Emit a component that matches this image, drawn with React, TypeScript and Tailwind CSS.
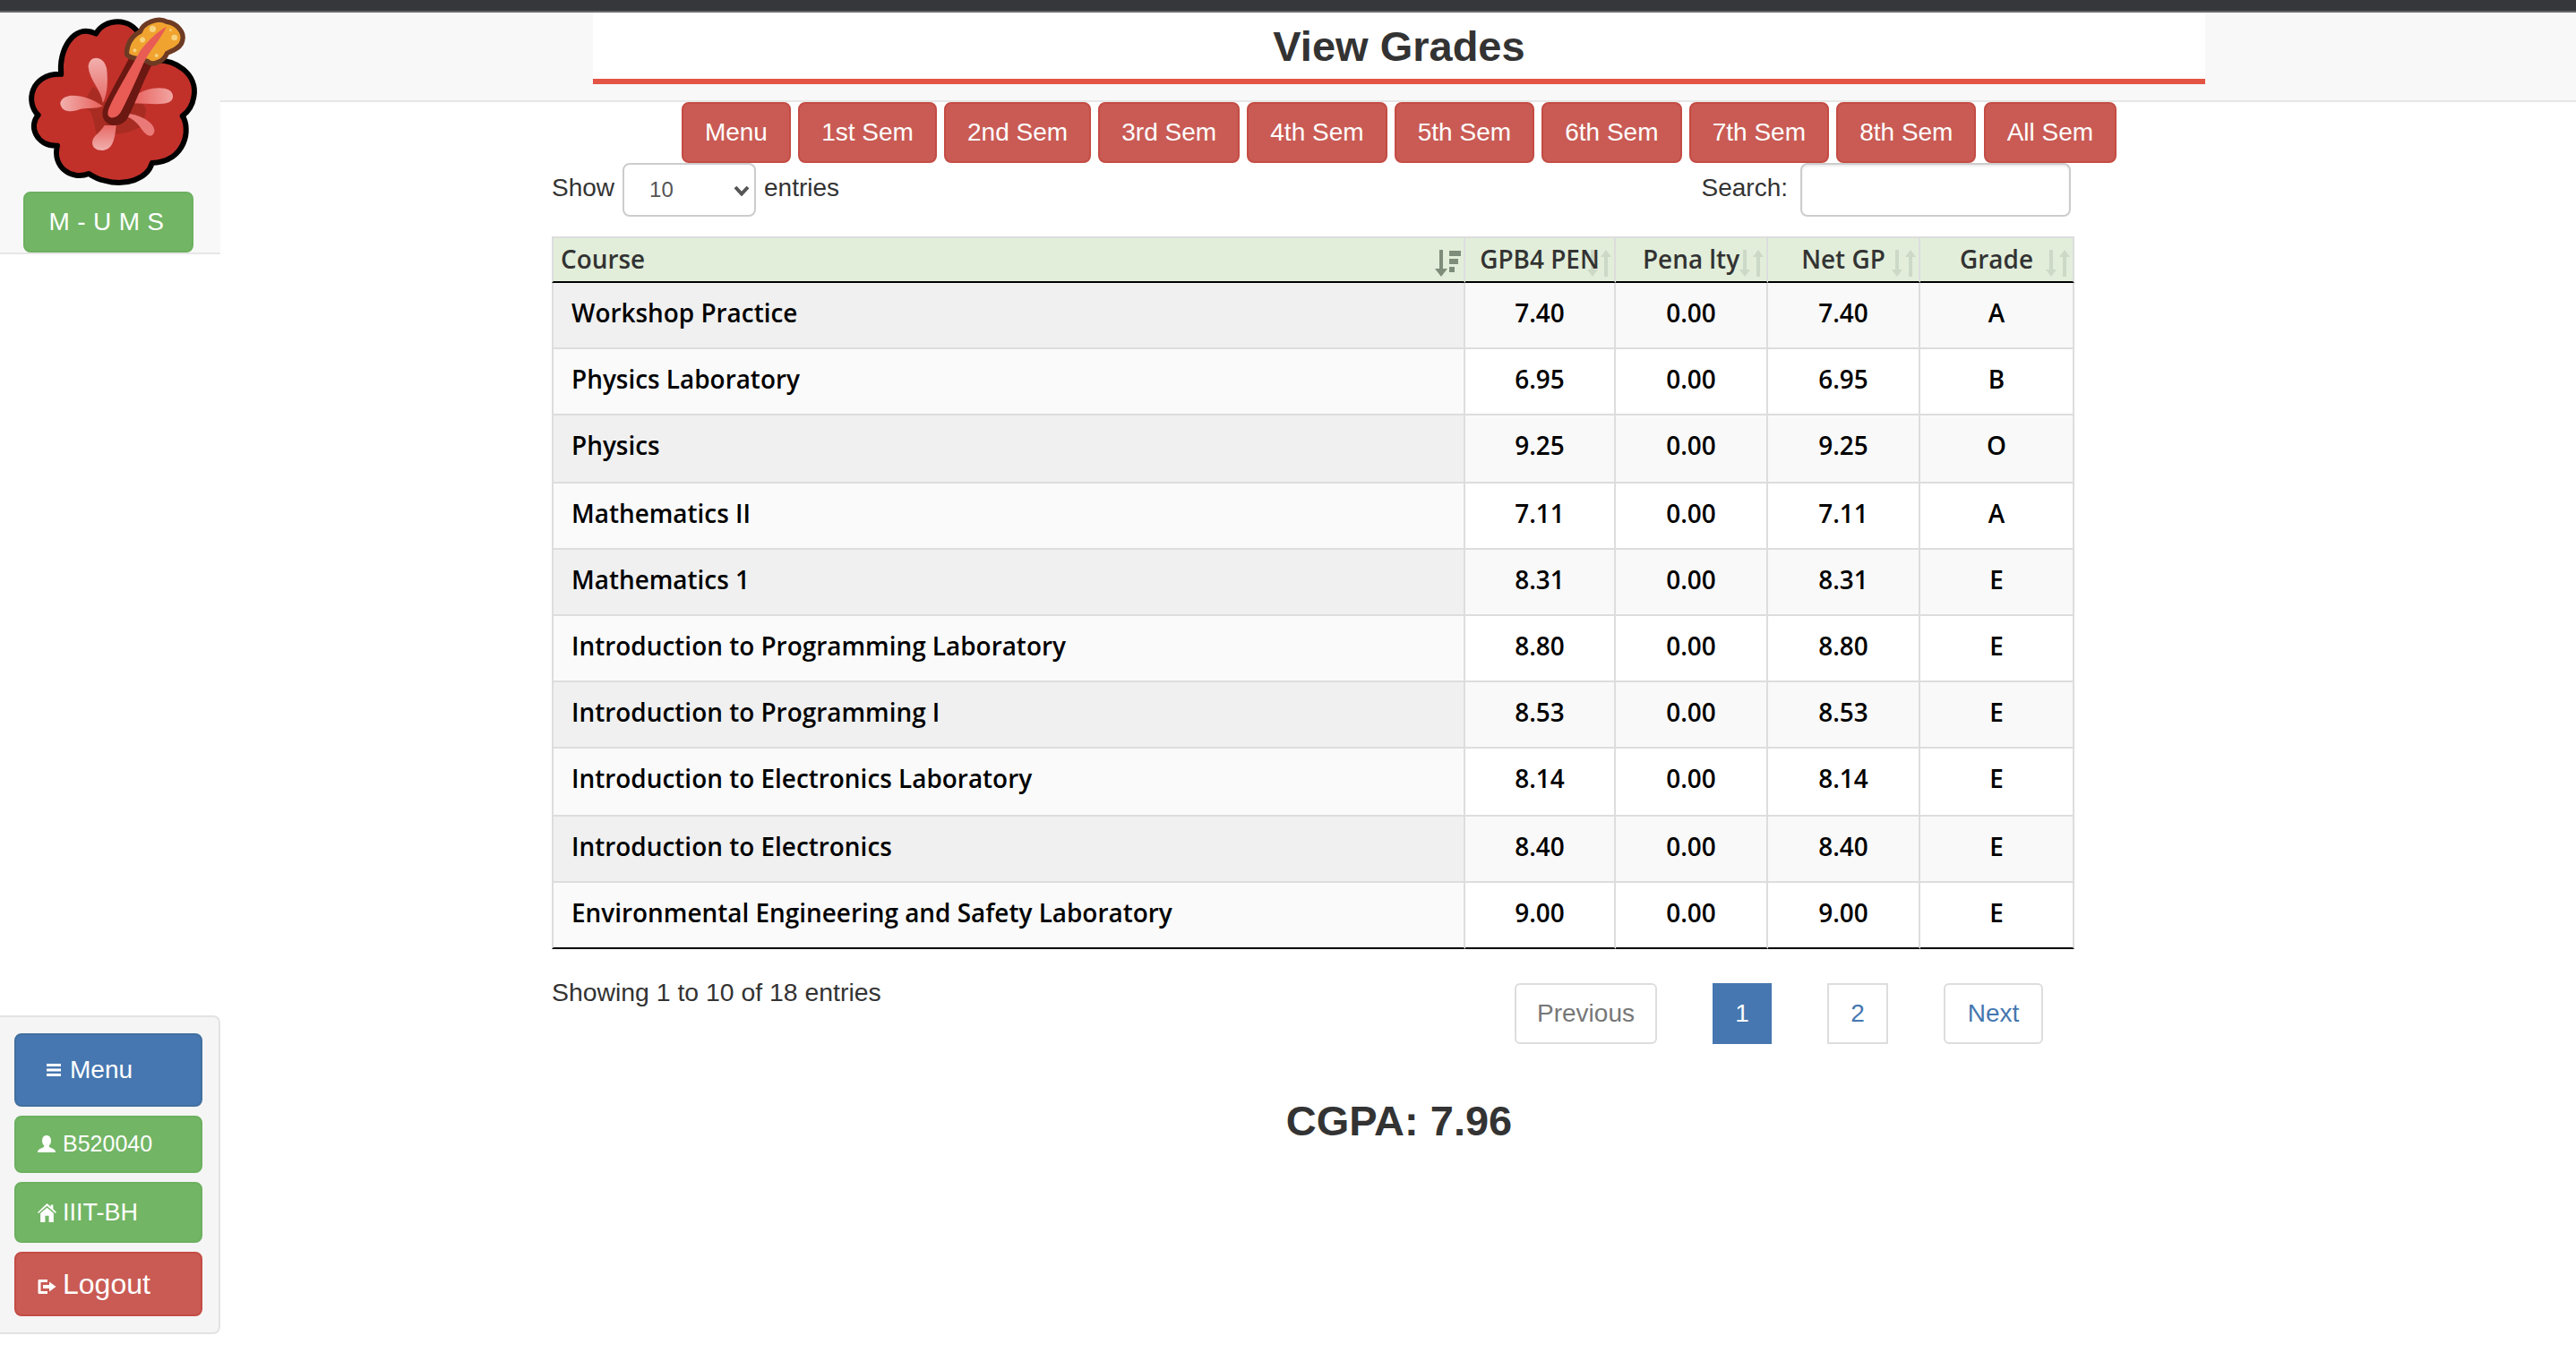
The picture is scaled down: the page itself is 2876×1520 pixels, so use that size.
const SEMESTERS = ["Menu", "1st Sem", "2nd Sem", "3rd Sem", "4th Sem", "5th Sem", "6th Sem", "7th Sem", "8th Sem", "All Sem"];

const GRADES = [
  { course: "Workshop Practice", gp: "7.40", grade: "A", h: "h-[74px]" },
  { course: "Physics Laboratory", gp: "6.95", grade: "B", h: "h-[74px]" },
  { course: "Physics", gp: "9.25", grade: "O", h: "h-[76px]" },
  { course: "Mathematics II", gp: "7.11", grade: "A", h: "h-[74px]" },
  { course: "Mathematics 1", gp: "8.31", grade: "E", h: "h-[74px]" },
  { course: "Introduction to Programming Laboratory", gp: "8.80", grade: "E", h: "h-[74px]" },
  { course: "Introduction to Programming I", gp: "8.53", grade: "E", h: "h-[74px]" },
  { course: "Introduction to Electronics Laboratory", gp: "8.14", grade: "E", h: "h-[76px]" },
  { course: "Introduction to Electronics", gp: "8.40", grade: "E", h: "h-[74px]" },
  { course: "Environmental Engineering and Safety Laboratory", gp: "9.00", grade: "E", h: "h-[74px]" },
];

const SANS = "font-['Liberation_Sans',Arial,sans-serif]";
const OPEN = "font-['Open_Sans',sans-serif]";

function Hibiscus() {
  return (
    <svg viewBox="90 50 580 580" className="block w-[193px] h-[193px]">
      <defs>
        <linearGradient id="petalA" x1="0" y1="0" x2="1" y2="0">
          <stop offset="0" stopColor="#f2b0ae" />
          <stop offset="1" stopColor="#e75f5a" />
        </linearGradient>
        <linearGradient id="petalB" x1="1" y1="0" x2="0" y2="0">
          <stop offset="0" stopColor="#f2a5a3" />
          <stop offset="1" stopColor="#e75f5a" />
        </linearGradient>
        <linearGradient id="petalC" x1="0" y1="0" x2="0" y2="1">
          <stop offset="0" stopColor="#f2b0ae" />
          <stop offset="1" stopColor="#e66a66" />
        </linearGradient>
        <linearGradient id="petalD" x1="0" y1="1" x2="0" y2="0">
          <stop offset="0" stopColor="#f2b0ae" />
          <stop offset="1" stopColor="#e66a66" />
        </linearGradient>
      </defs>
      <path
        d="M205 248 C195 170 245 75 322 112 C350 60 440 55 470 120 L500 203 C590 190 665 250 650 325 C645 355 630 375 612 388 C640 430 625 540 510 546 C495 600 420 625 350 605 C325 600 310 590 298 582 C240 605 175 560 192 488 C120 490 95 420 128 385 C85 345 100 245 205 248 Z"
        fill="#c1312a"
        stroke="#000"
        strokeWidth="18"
        strokeLinejoin="round"
      />
      <path
        d="M310 290 C330 300 345 320 350 340 L440 330 C470 340 490 350 490 370 L480 420 C450 440 410 450 380 450 C360 470 340 470 325 450 C315 420 315 395 300 370 L270 350 C290 330 300 310 310 290 Z"
        fill="#a92c22"
      />
      <path d="M296 222 C300 180 350 185 358 230 C362 270 362 310 345 345 C340 300 300 270 296 222 Z" fill="url(#petalC)" />
      <path d="M202 345 C210 305 290 315 345 355 C320 365 300 360 270 365 C240 378 205 375 202 345 Z" fill="url(#petalA)" />
      <path d="M450 322 C500 285 580 285 580 322 C580 360 510 345 440 345 Z" fill="url(#petalB)" />
      <path d="M430 380 C470 385 520 410 518 440 C510 470 485 450 470 425 C455 405 440 395 425 390 Z" fill="#ea7a77" />
      <path d="M350 420 L390 420 C385 450 385 500 345 504 C305 505 300 470 325 450 C335 440 345 430 350 420 Z" fill="url(#petalD)" />
      <path d="M344 375 C350 340 395 270 435 190 L510 215 C480 270 455 345 428 395 C405 435 340 425 344 375 Z" fill="#6b1712" />
      <path
        d="M560 72 C590 75 620 105 612 135 C605 165 570 170 560 178 C550 205 510 222 495 205 C470 195 430 195 425 180 C425 150 440 120 470 105 C480 75 530 55 560 72 Z"
        fill="#f0a32f"
        stroke="#6d3a24"
        strokeWidth="16"
        strokeLinejoin="round"
      />
      <path d="M362 375 C365 350 420 260 470 170 C500 130 530 105 558 88 C540 130 500 170 482 210 C460 260 430 330 405 375 C390 400 358 400 362 375 Z" fill="#e85c55" />
      <circle cx="512" cy="96" r="11" fill="#f6d37f" />
      <circle cx="478" cy="133" r="9" fill="#f6d37f" />
      <circle cx="585" cy="125" r="10" fill="#f6d37f" />
      <circle cx="452" cy="168" r="6" fill="#f6d37f" />
      <circle cx="525" cy="185" r="6" fill="#f6d37f" />
      <circle cx="572" cy="100" r="4" fill="#f6d37f" />
    </svg>
  );
}

function MenuGlyph() {
  return (
    <svg viewBox="0 0 16 16" className="w-4 h-4 fill-white">
      <rect x="0" y="1" width="16" height="3" />
      <rect x="0" y="6.5" width="16" height="3" />
      <rect x="0" y="12" width="16" height="3" />
    </svg>
  );
}

function UserGlyph() {
  return (
    <svg viewBox="0 0 20 20" className="w-5 h-5 fill-white">
      <path d="M10 0 C13 0 15 2.5 15 6 C15 8.5 14 10.5 12.6 11.6 C12.6 12.8 13.5 13.4 15 14 C17.5 15 20 16 20 19 L0 19 C0 16 2.5 15 5 14 C6.5 13.4 7.4 12.8 7.4 11.6 C6 10.5 5 8.5 5 6 C5 2.5 7 0 10 0 Z" />
    </svg>
  );
}

function HomeGlyph() {
  return (
    <svg viewBox="0 0 20 20" className="w-[21px] h-[21px] fill-white">
      <path d="M10 0 L14 3.6 L14 1.5 L16.5 1.5 L16.5 6 L20 9.5 L19 10.5 L10 2.6 L1 10.5 L0 9.5 Z" />
      <path d="M3 10.5 L10 4.5 L17 10.5 L17 20 L12 20 L12 13 L8 13 L8 20 L3 20 Z" />
    </svg>
  );
}

function LogoutGlyph() {
  return (
    <svg viewBox="0 0 21 20" className="w-[21px] h-[20px] fill-white mt-[6px]">
      <path d="M2 2 L11 2 L11 5 L3.5 5 L3.5 15 L11 15 L11 18 L2 18 C1 18 0.5 17.5 0.5 16.5 L0.5 3.5 C0.5 2.5 1 2 2 2 Z" />
      <path d="M6 8 L13 8 L13 4.5 L20.5 10 L13 15.5 L13 12 L6 12 Z" />
    </svg>
  );
}

/** 並び替え前の薄い矢印 */
function SortBoth() {
  return (
    <svg viewBox="0 0 27 30" className="absolute right-[3px] top-[13px] w-[27px] h-[30px] fill-[#cbd9c6]">
      <path d="M4 0 H8 V22 H12 L6 30 L0 22 H4 Z" />
      <path d="M19 30 H23 V8 H27 L21 0 L15 8 H19 Z" />
    </svg>
  );
}

function SortActive() {
  return (
    <svg viewBox="0 0 29 30" className="absolute right-[3px] top-[13px] w-[29px] h-[30px] fill-[#7e8c7a]">
      <path d="M5 0 H9 V21 H14 L7 30 L0 21 H5 Z" />
      <rect x="16" y="1" width="13" height="6" />
      <rect x="16" y="10" width="10" height="6" />
      <rect x="16" y="19" width="6" height="6" />
    </svg>
  );
}

function SideButton({ className, icon, label }: { className: string; icon: React.ReactNode; label: string }) {
  return (
    <div className={`flex items-center rounded-lg border-2 text-white ${className}`}>
      {icon}
      <span>{label}</span>
    </div>
  );
}

export default function App() {
  return (
    <div className={`w-[2876px] h-[1520px] overflow-hidden bg-white text-[#333] text-[28px] ${SANS}`}>
      <div className="h-[14px] bg-[#36373b] border-b-2 border-[#66676a]" />
      <div className="flex h-[1506px]">
        {/* 左カラム */}
        <div className="w-[246px] shrink-0 flex flex-col">
          <div className="h-[270px] bg-[#f8f8f8] border-b-2 border-[#e7e7e7] pl-[30px] pt-[3px]">
            <Hibiscus />
            <div className="w-[190px] h-[68px] -ml-[4px] mt-[4px] pl-[4px] flex items-center justify-center rounded-lg border-2 border-[#6cb05f] bg-[#72b565] text-white tracking-[8.4px]">
              M-UMS
            </div>
          </div>
          <div className="flex-1" />
          <div className="h-[356px] mb-[30px] bg-[#f5f5f5] border-2 border-l-0 border-[#e3e3e3] rounded-r-lg pl-[16px] pr-[18px] pt-[18px] flex flex-col gap-[10px]">
            <SideButton className="h-[82px] border-[#41709f] bg-[#4677b0] pl-[34px] gap-[10px]" icon={<MenuGlyph />} label="Menu" />
            <SideButton className="h-[64px] border-[#6cb05f] bg-[#72b565] pl-[24px] gap-[8px] text-[25px]" icon={<UserGlyph />} label="B520040" />
            <SideButton className="h-[68px] border-[#6cb05f] bg-[#72b565] pl-[24px] gap-[7px] text-[27px]" icon={<HomeGlyph />} label="IIIT-BH" />
            <SideButton className="h-[72px] border-[#c44c44] bg-[#c95b54] pl-[24px] gap-[7px] text-[32px]" icon={<LogoutGlyph />} label="Logout" />
          </div>
        </div>

        {/* 本体 */}
        <div className="flex-1 min-w-0">
          <div className="h-[100px] bg-[#f8f8f8] border-b-2 border-[#e7e7e7] pl-[416px]">
            <h1 className="w-[1800px] h-[80px] bg-white border-b-[6px] border-[#e35444] flex items-center justify-center text-[47px] leading-none font-bold">
              View Grades
            </h1>
          </div>

          <div className="w-[1800px] ml-[416px] flex justify-center gap-[8.2px]">
            {SEMESTERS.map((s) => (
              <div key={s} className="h-[68px] px-[24px] flex items-center rounded-lg border-2 border-[#c44c44] bg-[#c95b54] text-white">
                {s}
              </div>
            ))}
          </div>

          <div className="w-[1700px] ml-[370px]">
            <div className="flex justify-between pr-[4px] h-[82px]">
              <div className="flex items-start gap-[9px] leading-[56px]">
                <span>Show</span>
                <div className="relative">
                  <select className="block appearance-none w-[149px] h-[60px] pl-[28px] border-2 border-[#ccc] rounded-lg bg-white text-[24px] text-[#555]" defaultValue="10">
                    <option>10</option>
                    <option>25</option>
                    <option>50</option>
                  </select>
                  <svg viewBox="0 0 18 12" className="absolute right-[7px] top-[25px] w-[18px] h-[12px] fill-none stroke-[#555] stroke-[4px] pointer-events-none">
                    <path d="M2 2 L9 9.5 L16 2" />
                  </svg>
                </div>
                <span>entries</span>
              </div>
              <div className="flex items-start gap-[14px] leading-[56px]">
                <span>Search:</span>
                <input className="w-[302px] h-[60px] border-2 border-[#ccc] rounded-lg shadow-[inset_0_2px_2px_rgba(0,0,0,0.075)]" />
              </div>
            </div>

            <table className={`w-[1700px] table-fixed border-separate border-spacing-0 ${OPEN} font-semibold text-[27.92px]`}>
              <colgroup>
                <col className="w-[1020px]" />
                <col className="w-[168px]" />
                <col className="w-[170px]" />
                <col className="w-[170px]" />
                <col className="w-[172px]" />
              </colgroup>
              <thead>
                <tr className="h-[52px] bg-[#e2eeda] text-[#333]">
                  <th className="relative text-left font-semibold pl-[8px] border-t-2 border-l-2 border-b-2 border-r-2 border-t-[#ddd] border-l-[#ddd] border-r-[#ddd] border-b-black">
                    Course
                    <SortActive />
                  </th>
                  {["GPB4 PEN", "Pena lty", "Net GP", "Grade"].map((h) => (
                    <th key={h} className="relative font-semibold border-t-2 border-b-2 border-r-2 border-t-[#ddd] border-r-[#ddd] border-b-black">
                      <SortBoth />
                      <span className="relative">{h}</span>
                    </th>
                  ))}
                </tr>
              </thead>
              <tbody className="text-black">
                {GRADES.map((g, i) => {
                  const stripe = i % 2 === 0;
                  const last = i === GRADES.length - 1;
                  const cell = `align-top text-center pt-[13px] leading-[40px] border-b-2 border-r-2 border-r-[#ddd] ${last ? "border-b-black" : "border-b-[#ddd]"} ${stripe ? "bg-[#f9f9f9]" : "bg-white"}`;
                  return (
                    <tr key={g.course} className={g.h}>
                      <td className={`align-top pt-[13px] pl-[20px] leading-[40px] border-l-2 border-l-[#ddd] border-b-2 border-r-2 border-r-[#ddd] ${last ? "border-b-black" : "border-b-[#ddd]"} ${stripe ? "bg-[#f0f0f0]" : "bg-[#fafafa]"}`}>
                        {g.course}
                      </td>
                      <td className={cell}>{g.gp}</td>
                      <td className={cell}>0.00</td>
                      <td className={cell}>{g.gp}</td>
                      <td className={cell}>{g.grade}</td>
                    </tr>
                  );
                })}
              </tbody>
            </table>

            <div className="flex justify-between items-start pr-[35px]">
              <div className="mt-[28px] leading-[40px] text-[28.4px]">Showing 1 to 10 of 18 entries</div>
              <div className="mt-[38px] flex gap-[62px] text-[#4577b0]">
                <div className="w-[159px] h-[68px] flex items-center justify-center rounded-md border-2 border-[#ddd] text-[#777]">Previous</div>
                <div className="w-[66px] h-[68px] flex items-center justify-center bg-[#4677b0] text-white">1</div>
                <div className="w-[68px] h-[68px] flex items-center justify-center border-2 border-[#ddd]">2</div>
                <div className="w-[111px] h-[68px] flex items-center justify-center rounded-md border-2 border-[#ddd]">Next</div>
              </div>
            </div>
          </div>

          <div className="w-[1800px] ml-[416px] mt-[58px] text-center text-[47px] leading-[56px] font-bold">CGPA: 7.96</div>
        </div>
      </div>
    </div>
  );
}
